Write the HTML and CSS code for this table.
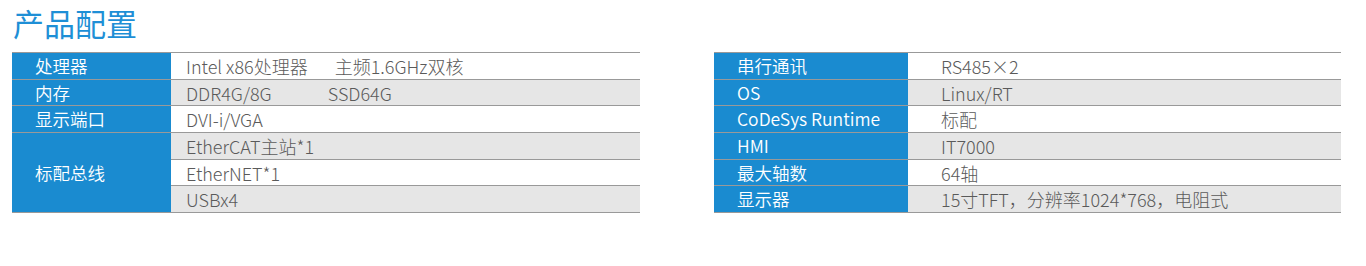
FILE: index.html
```html
<!DOCTYPE html>
<html lang="zh-CN">
<head>
<meta charset="utf-8">
<title>产品配置</title>
<link rel="stylesheet" href="styles.css">
</head>
<body>
<h2 class="title">产品配置</h2>
<div class="tables">
  <table class="spec spec-left">
    <tr><th>处理器</th><td class="odd">Intel x86处理器<span class="gap1">主频1.6GHz双核</span></td></tr>
    <tr><th>内存</th><td class="even">DDR4G/8G<span class="gap2">SSD64G</span></td></tr>
    <tr><th>显示端口</th><td class="odd">DVI-i/VGA</td></tr>
    <tr><th rowspan="3">标配总线</th><td class="even">EtherCAT主站*1</td></tr>
    <tr><td class="odd">EtherNET*1</td></tr>
    <tr><td class="even">USBx4</td></tr>
  </table>
  <table class="spec spec-right">
    <tr><th>串行通讯</th><td class="odd">RS485×2</td></tr>
    <tr><th>OS</th><td class="even">Linux/RT</td></tr>
    <tr><th>CoDeSys Runtime</th><td class="odd">标配</td></tr>
    <tr><th>HMI</th><td class="even">IT7000</td></tr>
    <tr><th>最大轴数</th><td class="odd">64轴</td></tr>
    <tr><th>显示器</th><td class="even">15寸TFT，分辨率1024*768，电阻式</td></tr>
  </table>
</div>
</body>
</html>
```

FILE: styles.css
```css
html, body {
  margin: 0;
  padding: 0;
  background: #ffffff;
}
body {
  font-family: "Noto Sans CJK SC", "Noto Sans", sans-serif;
  padding: 0 25px 0 12px;
}
.title {
  margin: 0;
  padding: 5px 0 0 1px;
  height: 52px;
  box-sizing: border-box;
  font-size: 31px;
  line-height: 36px;
  font-weight: 400;
  color: #1e8fd6;
}
.tables {
  display: flex;
  gap: 74px;
}
.spec {
  border-collapse: collapse;
  border-top: 1px solid #999999;
  font-size: 18px;
  font-weight: 300;
}
.spec-left { width: 628px; }
.spec-right { width: 627px; }
.spec th, .spec td {
  height: 25.7px;
  padding: 0;
  line-height: 20px;
  border-bottom: 1px solid #999999;
  text-align: left;
  vertical-align: middle;
  white-space: nowrap;
}
.spec th {
  background: #1a8bd0;
  color: #ffffff;
  font-weight: 350;
  font-size: 17.5px;
}
.spec-left th { width: 136px; padding-left: 23px; }
.spec-right th { width: 171px; padding-left: 23px; }
.spec td { color: #5a5a5a; }
.spec-left td { padding-left: 15px; }
.spec-right td { padding-left: 33px; }
.spec td.odd { background: #ffffff; }
.spec td.even { background: #e6e6e6; }
.gap1 { margin-left: 27px; }
.gap2 { margin-left: 56px; }
```
